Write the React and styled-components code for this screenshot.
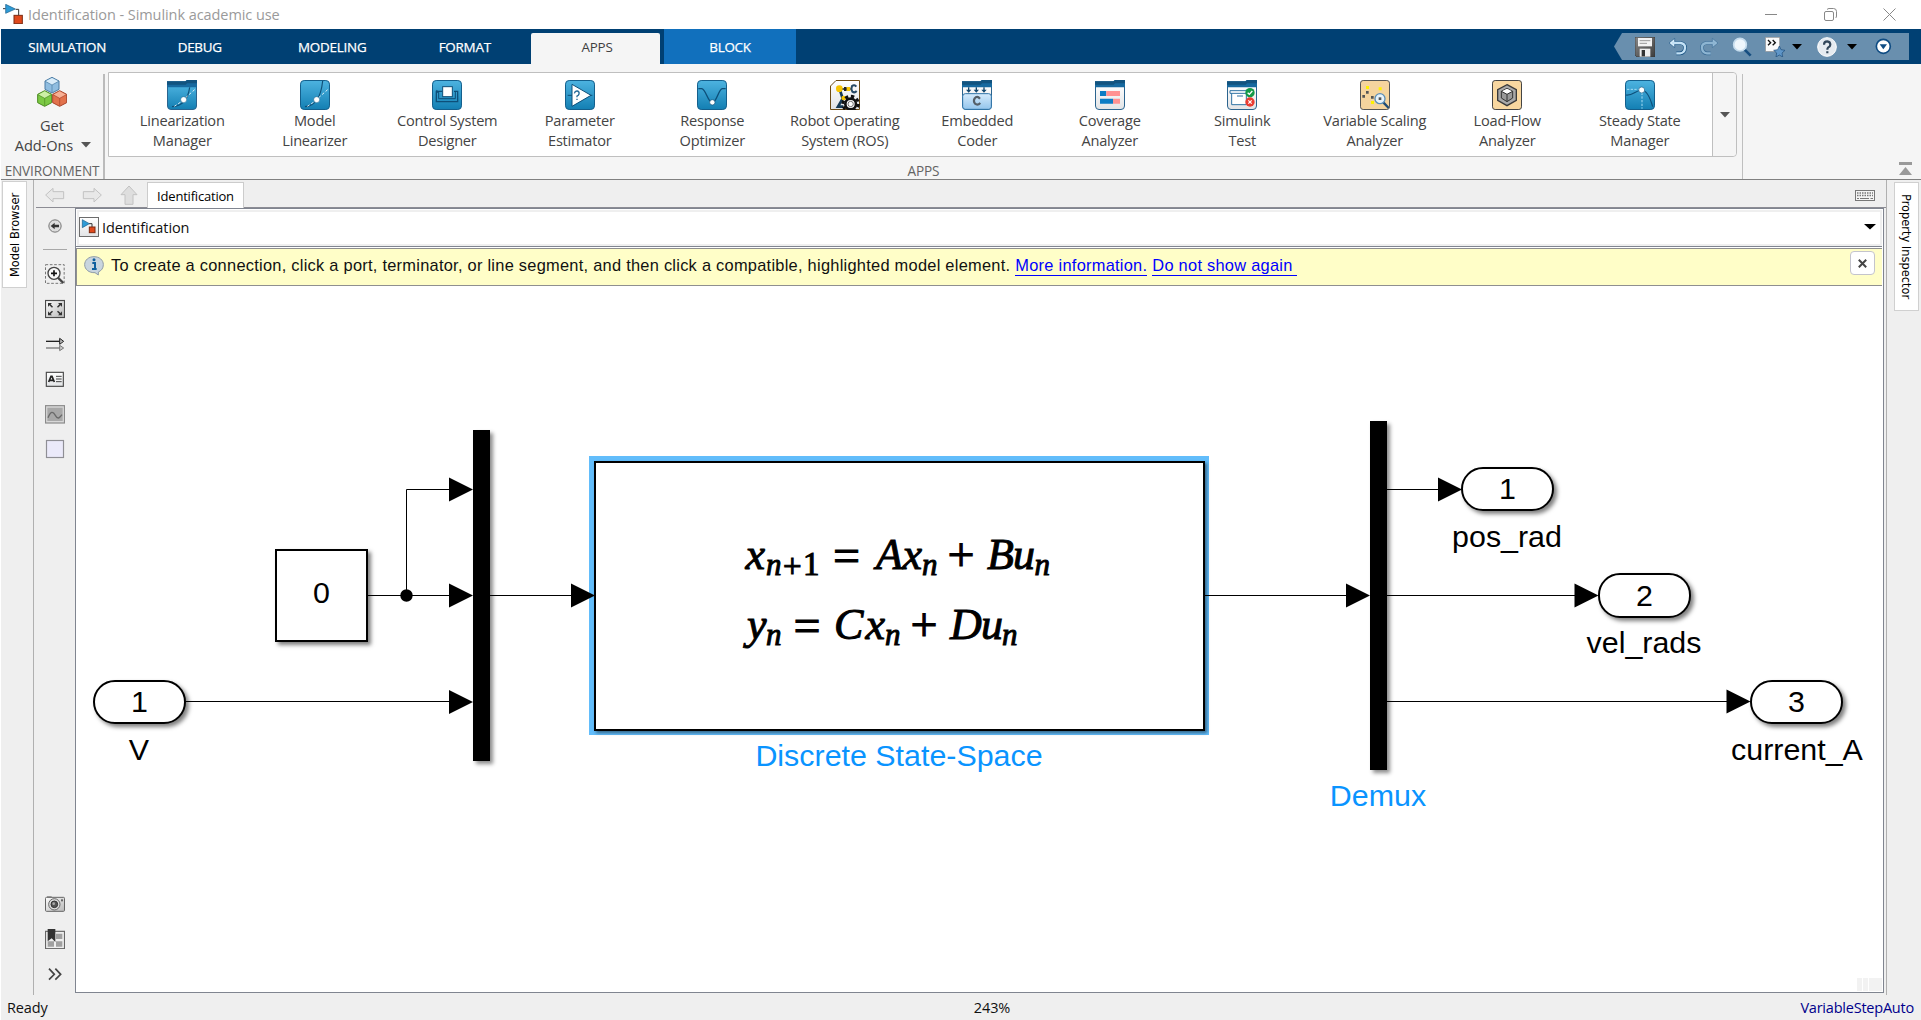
import React from "react";
import styled, { createGlobalStyle } from "styled-components";

const UI = `"Open Sans", "Noto Sans", sans-serif`;
const ARIAL = `"Liberation Sans", Arial, sans-serif`;
const TAHOMA = `"DejaVu Sans Condensed", "DejaVu Sans", sans-serif`;

const GlobalStyle = createGlobalStyle`
  *, *::before, *::after { box-sizing: border-box; }
  body { margin: 0; background: #fff; overflow: hidden; }
  svg { display: block; flex: none; }
`;

const Window = styled.div`
  width: 1921px;
  height: 1020px;
  padding-left: 1px;
  display: flex;
  flex-direction: column;
  background: #fff;
  font-family: ${UI};
  white-space: nowrap;
`;

/* ---------- title bar ---------- */
const TitleBar = styled.header`
  height: 29px;
  display: flex;
  align-items: center;
  justify-content: space-between;
  padding: 0 25px 1px 2px;
  color: #9a9a9a;
`;
const Title = styled.div`
  display: flex;
  align-items: center;
  gap: 5px;
  font-size: 14.5px;
  letter-spacing: -0.07px;
`;
const WindowButtons = styled.div`
  display: flex;
  gap: 46px;
`;

/* ---------- tab strip ---------- */
const TabStrip = styled.nav`
  height: 35px;
  display: flex;
  align-items: flex-end;
  background: #004073;
`;
const Tab = styled.div`
  width: 132.5px;
  height: 35px;
  display: flex;
  align-items: center;
  justify-content: center;
  padding-top: 1px;
  color: #fff;
  font-size: 13.4px;
  letter-spacing: -0.22px;
  -webkit-text-stroke: 0.25px #fff;
`;
const ActiveTab = styled(Tab)`
  width: 129px;
  height: 31px;
  margin-right: 4px;
  padding: 0 0 3px 3px;
  border-radius: 2px 2px 0 0;
  background: #f5f5f5;
  color: #404040;
  -webkit-text-stroke: 0;
`;
const ContextTab = styled(Tab)`
  width: 132px;
  background: #1170bd;
`;
const QuickAccess = styled.div`
  width: 295px;
  height: 27px;
  margin: 0 12px 4px auto;
  padding-left: 21px;
  display: flex;
  align-items: center;
  background: #698fae;
  clip-path: polygon(0 50%, 8px 0, 100% 0, 100% 100%, 8px 100%);
`;
const QuickItem = styled.div`
  margin-left: ${(p) => p.$gap || 0}px;
`;

/* ---------- ribbon ---------- */
const Ribbon = styled.section`
  height: 116px;
  display: flex;
  background: #f5f5f5;
  border-bottom: 1px solid #808080;
  color: #444;
`;
const Environment = styled.div`
  width: 104px;
  height: 105px;
  margin-top: 10px;
  border-right: 2px solid #bbb;
  display: flex;
  flex-direction: column;
  align-items: center;
  padding-top: 3px;
  font-size: 14.6px;
  line-height: 20px;
`;
const AddOnsLabel = styled.div`
  padding-top: 8px;
  text-align: center;
  width: 100%;
`;
const AddOnsRow = styled.div`
  display: flex;
  align-items: center;
  justify-content: center;
  gap: 8px;
  padding-left: 2px;
  letter-spacing: -0.1px;
`;
const SectionLabel = styled.div`
  font-size: 13.6px;
  letter-spacing: -0.15px;
  line-height: 18px;
  color: #646464;
  text-align: center;
`;
const EnvironmentLabel = styled(SectionLabel)`
  padding-top: 7px;
`;
const AppsSection = styled.div`
  width: 1637px;
  margin-top: 8px;
  padding-left: 3px;
`;
const Gallery = styled.div`
  width: 1629px;
  height: 85px;
  display: flex;
  background: #fff;
  border: 1px solid #bfbfbf;
  border-radius: 0 4px 4px 0;
  padding-left: 7px;
`;
const GalleryItem = styled.div`
  width: 132.5px;
  display: flex;
  flex-direction: column;
  align-items: center;
  padding-top: 7px;
  text-align: center;
  font-size: 14.6px;
  letter-spacing: -0.23px;
  line-height: 20px;
`;
const GalleryLabel = styled.div`
  padding-top: 0;
`;
const GalleryMore = styled.div`
  margin-left: auto;
  width: 24px;
  display: flex;
  align-items: center;
  justify-content: center;
  background: #f5f5f5;
  border-left: 1px solid #bfbfbf;
  border-radius: 0 4px 4px 0;
`;
const AppsSectionLabel = styled(SectionLabel)`
  padding: 5px 3px 0 0;
`;
const RibbonRest = styled.div`
  flex: 1;
  margin-top: 10px;
  border-left: 1px solid #bfbfbf;
  display: flex;
  align-items: flex-end;
  justify-content: flex-end;
  padding: 0 9px 3px 0;
`;

/* ---------- workspace ---------- */
const Workspace = styled.main`
  flex: 1;
  min-height: 0;
  display: flex;
  background: #efefef;
`;
const SideStrip = styled.aside`
  width: ${(p) => p.$width}px;
  height: 815px;
  padding: ${(p) => p.$pad};
  border: solid #b0b0b0;
  border-width: ${(p) => (p.$right ? "0 0 0 1px" : "0 1px 0 0")};
`;
const SideTab = styled.div`
  width: 25px;
  height: ${(p) => p.$height}px;
  display: flex;
  align-items: center;
  justify-content: center;
  background: #fff;
  border: 1px solid #d0d0d0;
  writing-mode: vertical-rl;
  transform: ${(p) => (p.$flip ? "rotate(180deg)" : "none")};
  font-family: ${TAHOMA};
  font-size: ${(p) => p.$size}px;
  font-stretch: condensed;
  color: #000;
`;
const Editor = styled.div`
  width: 1852px;
  padding-left: 2px;
  display: flex;
  flex-direction: column;
`;
const DocBar = styled.div`
  height: 28px;
  display: flex;
  align-items: flex-end;
  border-bottom: 1px solid #8c8c94;
  padding-left: 9px;
`;
const NavArrow = styled.div`
  width: ${(p) => p.$w || 37}px;
  height: 22px;
`;
const DocTab = styled.div`
  width: 97px;
  height: 26px;
  margin-bottom: -1px;
  border: 1px solid #ccc;
  border-bottom: 0;
  background: #fff;
  display: flex;
  align-items: center;
  justify-content: center;
  font-size: 13px;
  letter-spacing: -0.2px;
  color: #000;
`;
const KeyboardSlot = styled.div`
  margin: 0 11px 6px auto;
`;
const EditorBody = styled.div`
  height: 785px;
  display: flex;
`;
const Palette = styled.div`
  width: 39px;
  display: flex;
  flex-direction: column;
  padding: 0 2px 2px 0;
`;
const Tool = styled.div`
  height: 35px;
  display: flex;
  align-items: center;
  justify-content: center;
`;
const ToolRule = styled.div`
  height: 1px;
  margin: 6px 6px 6px 7px;
  background: #a8a8a8;
`;
const Spacer = styled.div`
  flex: 1;
`;
const EditorFrame = styled.div`
  width: 1809px;
  border: 1px solid #808590;
  background: #fff;
  display: flex;
  flex-direction: column;
`;
const PathBar = styled.div`
  height: 36px;
  margin: 1px 1px 0;
  border: 2px solid #efefef;
  display: flex;
  align-items: center;
  justify-content: space-between;
  padding: 0 4px 2px 0;
  font-size: 14.5px;
  letter-spacing: -0.1px;
  color: #111;
`;
const PathName = styled.div`
  display: flex;
  align-items: center;
  gap: 3px;
`;
const Notice = styled.div`
  height: 40px;
  margin-right: 1px;
  border-top: 1px solid #808590;
  padding-top: 1px;
`;
const NoticeInner = styled.div`
  height: 38px;
  display: flex;
  background: #fffec8;
  border: 1px solid #8f8f8f;
  border-width: 1px 0 1px 1px;
  padding: 7px 7px 0 7px;
  font: 16.4px/19px ${ARIAL};
  letter-spacing: 0.262px;
  color: #111;
`;
const NoticeText = styled.span`
  margin-left: 7px;
`;
const Link = styled.span`
  margin-left: 5px;
  height: 20px;
  color: #0000ff;
  border-bottom: 1px solid #0000ff;
  white-space: pre;
`;
const NoticeClose = styled.div`
  width: 25px;
  height: 24px;
  margin: -5px 0 0 auto;
  display: flex;
  align-items: center;
  justify-content: center;
  background: #fff;
  border: 1px solid #c4c4cc;
  border-radius: 4px;
`;

/* ---------- diagram ---------- */
const ORIGIN = { x: 76, y: 286 };
const Canvas = styled.div`
  position: relative;
  flex: 1;
  overflow: hidden;
  font-family: ${ARIAL};
  font-size: 30.4px;
  color: #000;
`;
const Placed = styled.div`
  position: absolute;
  left: ${(p) => p.$x - ORIGIN.x}px;
  top: ${(p) => p.$y - ORIGIN.y}px;
  width: ${(p) => p.$w}px;
  height: ${(p) => p.$h}px;
`;
const Bar = styled(Placed)`
  background: #000;
  box-shadow: 3px 3px 4px rgba(0, 0, 0, 0.45);
`;
const Block = styled(Placed)`
  display: flex;
  align-items: center;
  justify-content: center;
  background: #fff;
  border: 2px solid #000;
  box-shadow: 3px 3px 4px rgba(0, 0, 0, 0.5);
  padding-bottom: ${(p) => p.$lift || 0}px;
`;
const Port = styled(Block)`
  border-radius: 22px;
  padding-bottom: 1px;
`;
const SelectedBlock = styled(Block)`
  box-shadow: 2px 2px 3px rgba(0, 0, 0, 0.45);
`;
const Selection = styled(Placed)`
  background: #62bdfb;
`;
const Caption = styled(Placed)`
  width: 320px;
  height: 34px;
  line-height: 34px;
  text-align: center;
  color: ${(p) => (p.$selected ? "#0a94ff" : "#000")};
`;
const Wires = styled.svg`
  position: absolute;
  left: 0;
  top: 0;
`;
const GripRow = styled.div`
  position: absolute;
  right: 1px;
  bottom: 1px;
  display: flex;
  gap: 1px;
`;
const Grip = styled.div`
  width: ${(p) => p.$w}px;
  height: 13px;
  background: #f2f2f2;
`;

const StatusBar = styled.footer`
  height: 25px;
  flex: none;
  display: grid;
  grid-template-columns: 1fr auto 1fr;
  align-items: center;
  background: #efefef;
  padding: 0 7px 0 6px;
  font-size: 14.5px;
  letter-spacing: -0.15px;
  color: #111;
`;
const Solver = styled.div`
  text-align: right;
  color: #00008b;
  letter-spacing: -0.22px;
`;
const Zoom = styled.div`
  padding-left: 63px;
`;

/* ---------- icons ---------- */
const HiddenSvg = styled.svg`
  position: absolute;
`;
const Defs = () => (
  <HiddenSvg width="0" height="0" aria-hidden="true">
    <defs>
      <linearGradient id="blue" x1="0" y1="0" x2="0" y2="1">
        <stop offset="0" stopColor="#4db3e0" />
        <stop offset="1" stopColor="#137fb3" />
      </linearGradient>
      <linearGradient id="pale" x1="0" y1="0" x2="0" y2="1">
        <stop offset="0" stopColor="#ffffff" />
        <stop offset="1" stopColor="#e2e4e6" />
      </linearGradient>
      <linearGradient id="grey" x1="0" y1="0" x2="1" y2="1">
        <stop offset="0" stopColor="#fdfdfd" />
        <stop offset="1" stopColor="#b9b9b9" />
      </linearGradient>
      <linearGradient id="sky" x1="0" y1="0" x2="0" y2="1">
        <stop offset="0" stopColor="#d6ebfc" />
        <stop offset="1" stopColor="#93c5ec" />
      </linearGradient>
      <linearGradient id="disk" x1="0" y1="0" x2="1" y2="1">
        <stop offset="0" stopColor="#8a8a8a" />
        <stop offset="1" stopColor="#3c3c3c" />
      </linearGradient>
    </defs>
  </HiddenSvg>
);

const Icon = ({ s = 30, w, h, vw = 90, vh = 90, children }) => (
  <svg width={w || s} height={h || s} viewBox={`0 0 ${vw} ${vh}`} fill="none">
    {children}
  </svg>
);

const BlueTile = () => (
  <rect x="1.5" y="1.5" width="87" height="87" rx="11" fill="url(#blue)" stroke="#145f8c" strokeWidth="3" />
);
const FolderTile = ({ fill }) => (
  <>
    <path d="M1.500 12H88.500V78Q88.500 88.500 78 88.500H12Q1.500 88.500 1.500 78Z" fill={fill} stroke="#2b648f" strokeWidth="3" />
    <path d="M0 4H55L60 0H90V22H0Z" fill="#17699f" />
    <path d="M0 4H55L60 0H90V10H60L56 14H0Z" fill="#12537f" />
  </>
);
const Linear = ({ top }) => (
  <>
    <path d={`M15 80Q60 78 68 ${top}`} stroke="#0f5078" strokeWidth="3.500" />
    <path d="M22 79L46 63M56 53L84 28" stroke="#fff" strokeWidth="3" strokeDasharray="8 6" opacity=".85" />
    <circle cx="50" cy="59" r="9" fill="#fff" stroke="#105a86" strokeWidth="1.500" />
  </>
);

const appIcons = {
  manager: <><FolderTile fill="url(#blue)" /><Linear top={22} /></>,
  linearizer: <><BlueTile /><Linear top={3} /></>,
  control: (
    <>
      <BlueTile />
      <path d="M32 34H13V65H77V34H66" stroke="#0d4f79" strokeWidth="4" />
      <path d="M20 34V56H70V34" stroke="#0d4f79" strokeWidth="3" />
      <path d="M13 29l8 6-8 6z" fill="#0d4f79" />
      <rect x="32" y="20" width="29" height="30" fill="#fff" stroke="#0d4f79" strokeWidth="3" />
    </>
  ),
  estimator: (
    <>
      <BlueTile />
      <path d="M8 46H82" stroke="#0d4f79" strokeWidth="3" />
      <path d="M21 13V79L78 46Z" fill="#fff" stroke="#0d4f79" strokeWidth="3" />
      <path d="M28 40q2-8 9-7 7 2 5 9-1 4-6 6v4M36 56v4" stroke="#256a98" strokeWidth="4" />
    </>
  ),
  optimizer: (
    <>
      <BlueTile />
      <path d="M4 26H14C27 28 33 68 46 68S64 28 76 26H86" stroke="#0d4f79" strokeWidth="4" />
      <circle cx="46" cy="67" r="8" fill="#fff" stroke="#0d4f79" strokeWidth="2" />
    </>
  ),
  ros: (
    <>
      <path d="M18 1.500H88.500V88.500H1.500V18Z" fill="url(#pale)" stroke="#6b4a14" strokeWidth="3" />
      <path d="M27 27H62" stroke="#26323c" strokeWidth="5" />
      <path d="M29 27L38 56 24 80H40" stroke="#173a55" strokeWidth="8" />
      <circle cx="28" cy="26" r="10" fill="#f7c400" />
      <rect x="42" y="21" width="8" height="12" fill="#222" />
      <rect x="50" y="21" width="11" height="12" fill="#f7c400" />
      <path d="M79 20Q73 12 66 18Q62 27 67 35Q74 40 80 33" stroke="#274a66" strokeWidth="6" />
      <circle cx="41" cy="54" r="7" fill="#f7c400" />
      <circle cx="62" cy="72" r="23" stroke="#111" strokeWidth="9" strokeDasharray="10 8.060" />
      <circle cx="62" cy="72" r="16" fill="#fff" stroke="#111" strokeWidth="8" />
      <circle cx="62" cy="72" r="8" fill="#fff" stroke="#333" strokeWidth="2" />
    </>
  ),
  coder: (
    <>
      <FolderTile fill="url(#pale)" />
      <path d="M20 22v12M43 22v12M66 22v12" stroke="#12476e" strokeWidth="4" />
      <path d="M12 29h16l-8 9zM35 29h16l-8 9zM58 29h16l-8 9z" fill="#12476e" />
      <rect x="2" y="41" width="86" height="47" rx="8" fill="url(#sky)" stroke="#2f74a8" strokeWidth="3" />
      <path d="M54 56Q45 46 38 55Q33 64 39 71Q47 77 55 69" stroke="#555f68" strokeWidth="6.500" />
    </>
  ),
  coverage: (
    <>
      <FolderTile fill="url(#pale)" />
      <path d="M15 33H34V48H15ZM15 56H54V71H15Z" fill="#0b7cc4" />
      <path d="M34 33H75V48H34ZM54 56H75V71H54Z" fill="#ff9292" />
    </>
  ),
  test: (
    <>
      <FolderTile fill="url(#pale)" />
      <path d="M9 32H60V40H9ZM14 40V74H58V40" fill="#fff" stroke="#2e72a3" strokeWidth="3" />
      <path d="M30 48H48" stroke="#2e72a3" strokeWidth="3" />
      <circle cx="69" cy="38" r="14" fill="#139a48" />
      <path d="M62 38L67 43L76 33" stroke="#fff" strokeWidth="4" />
      <circle cx="69" cy="66" r="14" fill="#ea3d33" />
      <path d="M64 61L74 71M74 61L64 71" stroke="#fff" strokeWidth="3.500" />
    </>
  ),
  scaling: (
    <>
      <rect x="1.500" y="1.500" width="87" height="87" rx="8" fill="#f5d49e" stroke="#555" strokeWidth="3" />
      <path d="M18 18h9v9h-9zM56 22h9v9h-9zM33 63h9v9h-9z" fill="#fff200" />
      <path d="M18 33h8v8h-8zM7 45h8v8H7zM33 48h8v8h-8z" fill="#555" />
      <path d="M70 67L86 84" stroke="#1f4c76" strokeWidth="7" />
      <circle cx="60" cy="56" r="15" fill="#e8f3fb" stroke="#5c8fb8" strokeWidth="4" />
      <rect x="56" y="52" width="8" height="8" fill="#555" />
    </>
  ),
  loadflow: (
    <>
      <rect x="1.500" y="1.500" width="87" height="87" rx="8" fill="#f8d7a0" stroke="#444" strokeWidth="3" />
      <path d="M45 14L73 29V61L45 77L17 61V29Z" fill="#a9a9a9" stroke="#3a3a3a" strokeWidth="4" />
      <path d="M45 25L62 34V54L45 65L28 54V34Z" fill="#999" stroke="#333" strokeWidth="3" />
      <path d="M45 26L60 34L45 43L30 34Z" fill="#fff" />
      <path d="M45 43V64M28 34L45 43L62 34" stroke="#333" strokeWidth="3" />
    </>
  ),
  steady: (
    <>
      <BlueTile />
      <path d="M6 28H42M51 38V86" stroke="#a7dcf3" strokeWidth="3" strokeDasharray="7 4" />
      <path d="M3 45C22 48 34 30 50 30C66 31 76 55 83 80" stroke="#0d4f79" strokeWidth="3.500" />
      <circle cx="50" cy="30" r="9" fill="#fff" stroke="#155c86" strokeWidth="2" />
    </>
  ),
};

const apps = [
  ["manager", "Linearization", "Manager"],
  ["linearizer", "Model", "Linearizer"],
  ["control", "Control System", "Designer"],
  ["estimator", "Parameter", "Estimator"],
  ["optimizer", "Response", "Optimizer"],
  ["ros", "Robot Operating", "System (ROS)"],
  ["coder", "Embedded", "Coder"],
  ["coverage", "Coverage", "Analyzer"],
  ["test", "Simulink", "Test"],
  ["scaling", "Variable Scaling", "Analyzer"],
  ["loadflow", "Load-Flow", "Analyzer"],
  ["steady", "Steady State", "Manager"],
];

const ModelGlyph = () => (
  <Icon s={20} vw={60} vh={60}>
    <path d="M0 14H8M38 16H47V34" stroke="#333" strokeWidth="3" />
    <path d="M8 1V28L37 15Z" fill="#2e9bd6" stroke="#175a86" strokeWidth="2" />
    <rect x="33" y="34" width="25" height="25" fill="#e0491c" stroke="#7d2a10" strokeWidth="3" />
  </Icon>
);
const FramedModelGlyph = () => (
  <Icon s={20} vw={60} vh={60}>
    <rect x="1.500" y="1.500" width="57" height="57" fill="url(#pale)" stroke="#6c6c6c" strokeWidth="3" />
    <path d="M30 20H39V30" stroke="#333" strokeWidth="3" />
    <path d="M10 8V32L31 20Z" fill="#2e9bd6" stroke="#175a86" strokeWidth="2" />
    <rect x="31" y="30" width="17" height="17" fill="#e0491c" stroke="#7d2a10" strokeWidth="3" />
  </Icon>
);
const Caret = ({ w = 10, color = "#000" }) => (
  <svg width={w} height="6" viewBox="0 0 10 6" preserveAspectRatio="none">
    <path d="M0 0H10L5 5.500Z" fill={color} />
  </svg>
);
const Cube = ({ x, y, top, face, line }) => (
  <g transform={`translate(${x} ${y})`}>
    <path d="M0 -24L21 -13V12L0 23L-21 12V-13Z" fill={face} stroke={line} strokeWidth="3" />
    <path d="M0 -22L19 -12L0 -1L-19 -12Z" fill={top} />
    <path d="M-20 -12L0 -1L20 -12M0 -1V21" stroke={line} strokeWidth="2" />
  </g>
);
const AddOnsIcon = () => (
  <Icon s={30}>
    <Cube x={45} y={25} top="#d9ecf9" face="#8fbde0" line="#4a7ba3" />
    <Cube x={23} y={65} top="#cdf0a6" face="#7cc944" line="#4b8a22" />
    <Cube x={68} y={65} top="#f7b095" face="#e2724c" line="#a8432a" />
  </Icon>
);

const quick = [
  [0, (
    <Icon s={20} vw={60} vh={60}>
      <path d="M0 0H60V60H6L0 54Z" fill="url(#disk)" stroke="#333" strokeWidth="2" />
      <rect x="9" y="3" width="42" height="25" fill="#f2f2f2" />
      <path d="M14 11H46M14 19H36" stroke="#999" strokeWidth="3" />
      <rect x="14" y="35" width="32" height="24" fill="#eee" />
      <rect x="20" y="39" width="10" height="19" fill="#333" />
    </Icon>
  )],
  [13, (
    <Icon s={20} vw={60} vh={60}>
      <path d="M12 18H38Q52 20 51 33Q50 48 36 49H25" stroke="#1c5584" strokeWidth="11" />
      <path d="M3 18L20 4V32Z" fill="#d9eefb" stroke="#1c5584" strokeWidth="2" />
      <path d="M12 18H38Q52 20 51 33Q50 48 36 49H25" stroke="#c4e2f6" strokeWidth="7" />
    </Icon>
  )],
  [11, (
    <Icon s={20} vw={60} vh={60}>
      <path d="M48 18H22Q8 20 9 33Q10 48 24 49H35" stroke="#3f6f97" strokeWidth="11" />
      <path d="M57 18L40 4V32Z" fill="#94bad6" stroke="#3f6f97" strokeWidth="2" />
      <path d="M48 18H22Q8 20 9 33Q10 48 24 49H35" stroke="#8db5d2" strokeWidth="7" />
    </Icon>
  )],
  [13, (
    <Icon s={20} vw={60} vh={60}>
      <path d="M37 37L56 56" stroke="#164e80" strokeWidth="8" />
      <circle cx="24" cy="23" r="19" fill="#eef6fc" stroke="#c5dced" strokeWidth="5" />
    </Icon>
  )],
  [13, (
    <Icon s={20} vw={60} vh={60}>
      <rect x="2" y="1" width="42" height="42" fill="#fafafa" stroke="#999" strokeWidth="2" />
      <path d="M9 9l8 8-8 8M23 9l8 8-8 8" stroke="#111" strokeWidth="4" />
      <path d="M43 27L48 38L60 40L51 48L53 60L43 54L33 60L35 48L26 40L38 38Z" fill="#5f96c8" stroke="#1d4c78" strokeWidth="2" />
    </Icon>
  )],
  [7, <Caret />],
  [15, (
    <Icon s={20} vw={60} vh={60}>
      <circle cx="30" cy="30" r="28" fill="#e6ebf0" stroke="#fff" strokeWidth="3" />
      <path d="M21 23Q21 13 31 13Q40 14 40 23Q40 28 33 32Q31 34 31 38M31 43V49" stroke="#33475a" strokeWidth="6.500" />
    </Icon>
  )],
  [10, <Caret />],
  [18, (
    <Icon s={17} vw={51} vh={51}>
      <circle cx="25" cy="25" r="21" fill="#fff" stroke="#0f4c83" strokeWidth="5" />
      <path d="M14 19H36L25 34Z" fill="#0f4c83" />
    </Icon>
  )],
];

const tools = [
  <Icon s={20} vw={60} vh={60}>
    <rect x="1.500" y="2" width="56" height="56" stroke="#777" strokeWidth="3" strokeDasharray="8 5" />
    <path d="M38 40L55 57" stroke="#444" strokeWidth="7" />
    <circle cx="27" cy="28" r="18" fill="#f8f8f8" stroke="#444" strokeWidth="4" />
    <path d="M27 19V37M18 28H36" stroke="#111" strokeWidth="5" />
  </Icon>,
  <Icon s={20} vw={60} vh={60}>
    <rect x="1.500" y="4.500" width="57" height="51" fill="url(#grey)" stroke="#4a4a4a" strokeWidth="3.500" />
    <path d="M9 24V12H21L17 16L24 23L21 26L13 19ZM51 24V12H39L43 16L36 23L39 26L47 19ZM9 37V49H21L17 45L24 38L21 35L13 42ZM51 37V49H39L43 45L36 38L39 35L47 42Z" fill="#333" />
  </Icon>,
  <Icon s={20} vw={60} vh={60}>
    <path d="M3 22H46" stroke="#222" strokeWidth="4" />
    <path d="M44 13L56 22L44 31Z" fill="#bbb" stroke="#222" strokeWidth="3" />
    <path d="M3 42H46" stroke="#777" strokeWidth="4" />
    <path d="M44 34L56 42L44 50Z" fill="#ccc" stroke="#777" strokeWidth="3" />
  </Icon>,
  <Icon s={20} vw={60} vh={60}>
    <rect x="4" y="10" width="51" height="42" fill="url(#pale)" stroke="#4a4a4a" strokeWidth="3.500" />
    <path d="M11 39L18 22H21L28 39M14 34H25" stroke="#222" strokeWidth="5" />
    <path d="M33 22H50M33 30H50M33 38H50" stroke="#444" strokeWidth="3" />
  </Icon>,
  <Icon s={20} vw={60} vh={60}>
    <rect x="1.500" y="5" width="57" height="52" fill="#d8d8d8" stroke="#8a8a8a" strokeWidth="3.500" />
    <rect x="7" y="11" width="46" height="40" fill="#a8a8a8" />
    <path d="M9 41C17 21 24 21 31 34S43 43 51 32" stroke="#6a6a6a" strokeWidth="4" />
  </Icon>,
  <Icon s={20} vw={60} vh={60}>
    <rect x="4.500" y="4.500" width="51" height="51" fill="#ebeafa" stroke="#8f8f95" strokeWidth="3.500" />
  </Icon>,
];

const bottomTools = [
  <Icon s={20} vw={60} vh={60}>
    <rect x="1.500" y="10" width="57" height="42" rx="3" fill="url(#grey)" stroke="#666" strokeWidth="3" />
    <path d="M6 7H20V11H6Z" fill="#777" />
    <circle cx="28" cy="31" r="17" fill="#ddd" stroke="#666" strokeWidth="3" />
    <circle cx="28" cy="31" r="10" fill="#555" stroke="#333" strokeWidth="3" />
    <circle cx="26" cy="29" r="4" fill="#aaa" />
    <rect x="48" y="16" width="6" height="6" fill="#666" />
  </Icon>,
  <Icon s={20} vw={60} vh={60}>
    <rect x="1.500" y="7" width="57" height="52" fill="#eee" stroke="#666" strokeWidth="3.500" />
    <path d="M33 14H52V30H33ZM33 37H52V53H33ZM8 37H27V53H8Z" fill="#a0a0a0" />
    <path d="M8 0H31V39L20 28L8 37Z" fill="#333" />
  </Icon>,
  <Icon s={20} vw={60} vh={60}>
    <path d="M12 14L28 31L12 47M31 14L47 31L31 47" stroke="#444" strokeWidth="5" />
  </Icon>,
];

/* ---------- diagram data ---------- */
const wires = [
  "M368 595.5H449", "M406.500 595.5V489.5H449", "M185 701.5H449", "M490 595.5H571",
  "M1204 595.5H1346", "M1387 489.5H1438", "M1387 595.5H1575", "M1387 701.5H1727",
];
const heads = [[473, 489.5], [473, 595.5], [473, 702], [595, 595.5], [1370, 595.5], [1462, 489.5], [1598.500, 595.5], [1750.500, 701.5]];

const Var = ({ x, y = 0, children }) => <tspan x={x} y={y}>{children}</tspan>;

const Equations = () => (
  <svg width="600" height="260" viewBox="600 464 600 260" overflow="visible" fontFamily='"Liberation Serif", "Times New Roman", serif' fontSize="44" fontStyle="italic" stroke="#000" strokeWidth="1">
    <text>
      <Var x="745.5" y="567">x</Var>
      <tspan fontSize="31"><Var x="766" y="573">n</Var></tspan>
      <tspan fontSize="33" fontStyle="normal"><Var x="783" y="575">+</Var><Var x="803" y="573">1</Var></tspan>
      <tspan fontSize="48" fontStyle="normal"><Var x="833" y="570">=</Var></tspan>
      <Var x="876" y="567">A</Var>
      <Var x="902.5" y="567">x</Var>
      <tspan fontSize="31"><Var x="922" y="573">n</Var></tspan>
      <tspan fontSize="48" fontStyle="normal"><Var x="947.500" y="569">+</Var></tspan>
      <Var x="987" y="567">B</Var>
      <Var x="1013" y="567">u</Var>
      <tspan fontSize="31"><Var x="1034.500" y="573">n</Var></tspan>
    </text>
    <text>
      <Var x="747" y="637">y</Var>
      <tspan fontSize="31"><Var x="766" y="643">n</Var></tspan>
      <tspan fontSize="48" fontStyle="normal"><Var x="793.500" y="640">=</Var></tspan>
      <Var x="834" y="637">C</Var>
      <Var x="865.5" y="637">x</Var>
      <tspan fontSize="31"><Var x="885" y="643">n</Var></tspan>
      <tspan fontSize="48" fontStyle="normal"><Var x="910.500" y="639">+</Var></tspan>
      <Var x="950" y="637">D</Var>
      <Var x="981" y="637">u</Var>
      <tspan fontSize="31"><Var x="1002" y="643">n</Var></tspan>
    </text>
  </svg>
);

const Diagram = () => (
  <Canvas>
    <Bar $x={473} $y={430} $w={17} $h={331} />
    <Bar $x={1370} $y={421} $w={17} $h={349} />
    <Block $x={275} $y={549} $w={93} $h={93} $lift={7}>0</Block>
    <Port $x={93} $y={680} $w={93} $h={44}>1</Port>
    <Port $x={1461} $y={467} $w={93} $h={44}>1</Port>
    <Port $x={1598} $y={573} $w={93} $h={45}>2</Port>
    <Port $x={1750} $y={680} $w={93} $h={44}>3</Port>
    <Selection $x={589} $y={456} $w={620} $h={279} />
    <SelectedBlock $x={594} $y={461} $w={611} $h={270}>
      <Equations />
    </SelectedBlock>
    <Caption $x={-21} $y={732}>V</Caption>
    <Caption $x={739} $y={738} $selected>Discrete State-Space</Caption>
    <Caption $x={1218} $y={778} $selected>Demux</Caption>
    <Caption $x={1347} $y={519}>pos_rad</Caption>
    <Caption $x={1484} $y={625}>vel_rads</Caption>
    <Caption $x={1637} $y={732}>current_A</Caption>
    <Wires width="1807" height="706" viewBox="76 286 1807 706" fill="none">
      {wires.map((d) => <path key={d} d={d} stroke="#000" />)}
      {heads.map(([x, y]) => (
        <path key={`${x}-${y}`} d={`M${x} ${y}L${x - 24} ${y - 12}V${y + 12}Z`} fill="#000" />
      ))}
      <circle cx="406.500" cy="595.500" r="6.200" fill="#000" />
    </Wires>
    <GripRow><Grip $w={5} /><Grip $w={5} /><Grip $w={13} /></GripRow>
  </Canvas>
);

export default function App() {
  return (
    <Window>
      <GlobalStyle />
      <Defs />
      <TitleBar>
        <Title><ModelGlyph />Identification - Simulink academic use</Title>
        <WindowButtons>
          <Icon s={13} vw={13} vh={13}><path d="M0 6.500H12" stroke="#888" /></Icon>
          <Icon s={13} vw={13} vh={13}>
            <rect x=".5" y="3.500" width="9" height="9" rx="1.500" stroke="#888" />
            <path d="M3 1.500Q4 .5 5 .5H9.500Q12.500 .5 12.500 3.500V8Q12.500 9.500 11.500 10" stroke="#888" />
          </Icon>
          <Icon s={13} vw={13} vh={13}><path d="M.5 .5L12.500 12.500M12.500 .5L.5 12.500" stroke="#888" /></Icon>
        </WindowButtons>
      </TitleBar>

      <TabStrip>
        <Tab>SIMULATION</Tab>
        <Tab>DEBUG</Tab>
        <Tab>MODELING</Tab>
        <Tab>FORMAT</Tab>
        <ActiveTab>APPS</ActiveTab>
        <ContextTab>BLOCK</ContextTab>
        <QuickAccess>
          {quick.map(([gap, icon], i) => <QuickItem key={i} $gap={gap}>{icon}</QuickItem>)}
        </QuickAccess>
      </TabStrip>

      <Ribbon>
        <Environment>
          <AddOnsIcon />
          <AddOnsLabel>
            Get
            <AddOnsRow>Add-Ons<Caret color="#555" /></AddOnsRow>
          </AddOnsLabel>
          <EnvironmentLabel>ENVIRONMENT</EnvironmentLabel>
        </Environment>
        <AppsSection>
          <Gallery>
            {apps.map(([icon, a, b]) => (
              <GalleryItem key={icon}>
                <Icon>{appIcons[icon]}</Icon>
                <GalleryLabel>{a}<br />{b}</GalleryLabel>
              </GalleryItem>
            ))}
            <GalleryMore><Caret color="#555" /></GalleryMore>
          </Gallery>
          <AppsSectionLabel>APPS</AppsSectionLabel>
        </AppsSection>
        <RibbonRest>
          <Icon s={14} vw={14} vh={14}><path d="M1 0H14V3H1ZM7.500 5L14 13H1Z" fill="#9a9a9a" /></Icon>
        </RibbonRest>
      </Ribbon>

      <Workspace>
        <SideStrip $width={33} $pad="1px 0 0 1px">
          <SideTab $height={107} $size={12.7} $flip>Model Browser</SideTab>
        </SideStrip>
        <Editor>
          <DocBar>
            <NavArrow>
              <Icon s={20} vw={60} vh={60}>
                <path d="M2 30L24 10V20H56V41H24V51Z" fill="#e8e8e8" stroke="#c2c2c2" strokeWidth="3" />
              </Icon>
            </NavArrow>
            <NavArrow>
              <Icon s={20} vw={60} vh={60}>
                <path d="M58 30L36 10V20H4V41H36V51Z" fill="#e8e8e8" stroke="#c2c2c2" strokeWidth="3" />
              </Icon>
            </NavArrow>
            <NavArrow $w={28}>
              <Icon s={20} vw={60} vh={60}>
                <path d="M30 3L54 29H42V58H18V29H6Z" fill="#dedede" stroke="#c2c2c2" strokeWidth="3" />
              </Icon>
            </NavArrow>
            <DocTab>Identification</DocTab>
            <KeyboardSlot>
              <Icon w={20} h={11} vw={20} vh={11}>
                <rect x=".5" y=".5" width="19" height="10" fill="#f4f4f4" stroke="#777" />
                <path d="M2 3H18M2 5.500H18" stroke="#777" strokeWidth="1.500" strokeDasharray="1.500 1" />
                <path d="M2 8.500H4M5 8.500H14M15.500 8.500H18" stroke="#777" />
              </Icon>
            </KeyboardSlot>
          </DocBar>
          <EditorBody>
            <Palette>
              <Tool>
                <Icon s={14} vw={42} vh={42}>
                  <circle cx="21" cy="21" r="18.500" fill="#ddd" stroke="#777" strokeWidth="3" />
                  <path d="M8 21L20 11V17H33V25H20V31Z" fill="#333" />
                </Icon>
              </Tool>
              <ToolRule />
              {tools.map((t, i) => <Tool key={i}>{t}</Tool>)}
              <Spacer />
              {bottomTools.map((t, i) => <Tool key={i}>{t}</Tool>)}
            </Palette>
            <EditorFrame>
              <PathBar>
                <PathName><FramedModelGlyph />Identification</PathName>
                <Caret w={12} />
              </PathBar>
              <Notice>
                <NoticeInner>
                  <Icon s={20} vw={60} vh={60}>
                    <path d="M30 2C46 2 58 12 58 26C58 37 52 44 43 48V57L33 50C15 51 2 40 2 26C2 12 14 2 30 2Z" fill="#c9d5df" stroke="#8f9ba6" strokeWidth="3" />
                    <path d="M25 21H33V38M24 39H38" stroke="#0f5f9e" strokeWidth="6" />
                    <circle cx="30" cy="11" r="4.500" fill="#0f5f9e" />
                  </Icon>
                  <NoticeText>To create a connection, click a port, terminator, or line segment, and then click a compatible, highlighted model element.</NoticeText>
                  <Link>More information.</Link>
                  <Link>{"Do not show again "}</Link>
                  <NoticeClose>
                    <Icon s={9} vw={9} vh={9}><path d="M.8 .8L8.200 8.200M8.200 .8L.8 8.200" stroke="#444" strokeWidth="2" /></Icon>
                  </NoticeClose>
                </NoticeInner>
              </Notice>
              <Diagram />
            </EditorFrame>
          </EditorBody>
        </Editor>
        <SideStrip $right $width={35} $pad="2px 0 0 7px">
          <SideTab $height={129} $size={12.7}>Property Inspector</SideTab>
        </SideStrip>
      </Workspace>

      <StatusBar>
        <div>Ready</div>
        <Zoom>243%</Zoom>
        <Solver>VariableStepAuto</Solver>
      </StatusBar>
    </Window>
  );
}
